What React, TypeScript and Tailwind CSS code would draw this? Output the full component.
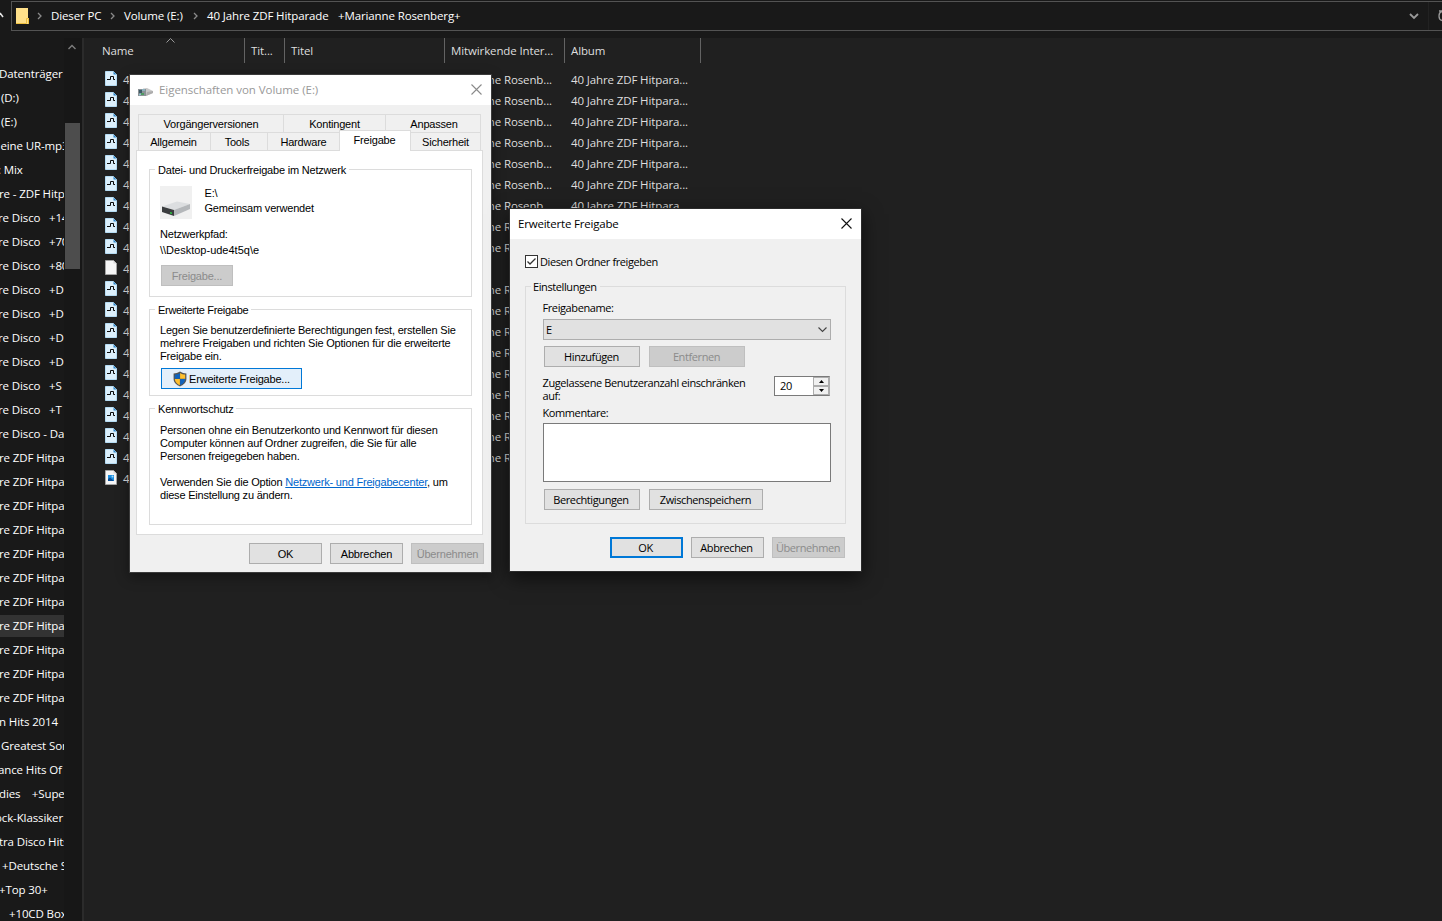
import React from 'react';

const folders = [
  { text: 'Datenträger', className: '-ml-px' },
  { text: '(D:)', className: 'ml-px' },
  { text: '(E:)', className: 'ml-px' },
  { text: 'eine UR-mp3', className: 'ml-[0.500px]' },
  { text: ': Mix', className: '-ml-[2px]' },
  { text: 're - ZDF Hitp', className: '-ml-px' },
  { text: 're Disco   +14', className: '-ml-[2px]' },
  { text: 're Disco   +70', className: '-ml-[2px]' },
  { text: 're Disco   +80', className: '-ml-[2px]' },
  { text: 're Disco   +D', className: '-ml-[2px]' },
  { text: 're Disco   +D', className: '-ml-[2px]' },
  { text: 're Disco   +D', className: '-ml-[2px]' },
  { text: 're Disco   +D', className: '-ml-[2px]' },
  { text: 're Disco   +S', className: '-ml-[2px]' },
  { text: 're Disco   +T', className: '-ml-[2px]' },
  { text: 're Disco - Da', className: '-ml-[2px]' },
  { text: 're ZDF Hitpa', className: '-ml-px' },
  { text: 're ZDF Hitpa', className: '-ml-px' },
  { text: 're ZDF Hitpa', className: '-ml-px' },
  { text: 're ZDF Hitpa', className: '-ml-px' },
  { text: 're ZDF Hitpa', className: '-ml-px' },
  { text: 're ZDF Hitpa', className: '-ml-px' },
  { text: 're ZDF Hitpa', className: '-ml-px' },
  { text: 're ZDF Hitpa', className: '-ml-px', selected: true },
  { text: 're ZDF Hitpa', className: '-ml-px' },
  { text: 're ZDF Hitpa', className: '-ml-px' },
  { text: 're ZDF Hitpa', className: '-ml-px' },
  { text: 'n Hits 2014', className: '-ml-px' },
  { text: 'Greatest Son', className: 'ml-px' },
  { text: 'ance Hits Of 9', className: '-ml-[2px]' },
  { text: 'dies    +Super', className: '-ml-px' },
  { text: 'ock-Klassiker', className: '-ml-[5px]' },
  { text: 'tra Disco Hits', className: '-ml-px' },
  { text: '+Deutsche S', className: 'ml-[2px]' },
  { text: '+Top 30+', className: '-ml-px' },
  { text: '+10CD Box', className: 'ml-[9px]' },
];

const files = Array.from({ length: 20 }, (_, i) => (i === 9 ? 'blank' : i === 19 ? 'image' : 'music'));

const FileIcon = ({ kind }: { kind: string }) => (
  <svg width="12" height="15" viewBox="0 0 12 15" className="mb-[2px] -ml-px shrink-0">
    <path d="M0.5 0.5H8.5L11.5 3.5V14.5H0.5Z" fill={kind === 'music' ? '#dcf0fc' : '#f6f6f6'} stroke={kind === 'music' ? '#b5dcf4' : '#a5a5a5'} />
    <path d="M8.5 0.5V3.5H11.5Z" fill={kind === 'music' ? '#2f86c8' : '#d8d8d8'} />
    {kind === 'music' && <path d="M2 8.5H5.5V5.5H8.5V8.5H10" fill="none" stroke="#0b0b0b" />}
    {kind === 'image' && (
      <>
        <rect x="3" y="5" width="6" height="6" fill="#1d8fe0" />
        <path d="M3 11V9L5 7.500L9 11Z" fill="#0b4d93" />
        <circle cx="7.500" cy="6.500" r="1" fill="#9fdcff" />
      </>
    )}
  </svg>
);

const Chevron = ({ className = '' }: { className?: string }) => (
  <svg width="5" height="8" viewBox="0 0 5 8" className={className}>
    <path d="M1 1L4 4L1 7" fill="none" stroke="#8a8a8a" strokeWidth="1.3" />
  </svg>
);

const CloseIcon = ({ color }: { color: string }) => (
  <svg width="11" height="11" viewBox="0 0 11 11">
    <path d="M0.5 0.5L10.5 10.5M10.5 0.5L0.5 10.5" stroke={color} strokeWidth="1.1" />
  </svg>
);

const Shield = () => (
  <svg width="14" height="16" viewBox="0 0 14 16" className="shrink-0">
    <path d="M7 0.600C5 2 3 2.400 0.600 2.400V8C0.600 11.500 3.500 14 7 15.400C10.500 14 13.400 11.500 13.400 8V2.400C11 2.400 9 2 7 0.600Z" fill="#555" />
    <path d="M6.900 2C5.300 3 3.500 3.500 1.800 3.500V7.800H6.900Z" fill="#0f63bd" />
    <path d="M7.100 2C8.700 3 10.500 3.500 12.200 3.500V7.800H7.100Z" fill="#ffc02e" />
    <path d="M1.800 8H6.900V14.200C4 13 1.900 11 1.800 8Z" fill="#ffc02e" />
    <path d="M12.200 8H7.100V14.200C10 13 12.100 11 12.200 8Z" fill="#0f63bd" />
  </svg>
);

const Button = ({ children, className = '', disabled, primary }: any) => (
  <button
    disabled={disabled}
    className={`flex h-[21px] shrink-0 items-center justify-center whitespace-nowrap ${
      disabled
        ? 'border border-[#bfbfbf] bg-[#cccccc] text-[#8b8b8b]'
        : primary
          ? 'border-2 border-[#0078d7] bg-[#e1e1e1]'
          : 'border border-[#adadad] bg-[#e1e1e1]'
    } ${className}`}
  >
    {children}
  </button>
);

const Group = ({ title, className = '', legend = '', children }: any) => (
  <section className={`border border-[#dcdcdc] ${className}`}>
    <h3 className={`-mt-2 ml-[5px] h-4 w-fit leading-4 whitespace-nowrap ${legend}`}>{title}</h3>
    {children}
  </section>
);

const Tab = ({ children, className = '' }: any) => (
  <div className={`flex items-center justify-center border-t border-l border-[#dcdcdc] ${className}`}>{children}</div>
);

const AddressBar = () => (
  <header className="flex h-[38px] shrink-0 items-start bg-[#191919] pt-px">
    <svg width="11" height="30" viewBox="0 0 11 30" className="shrink-0">
      <path d="M0 12L3 16" stroke="#e6e6e6" strokeWidth="1.5" />
    </svg>
    <div className="flex h-[30px] flex-1 items-center border-y border-l border-[#535353] text-white">
      <svg width="13" height="16" viewBox="0 0 13 16" className="ml-1">
        <path d="M0 0H12V10H13V16H0Z" fill="#ffe08a" />
        <path d="M0 15.500H10.500V10.500H12.500V16" fill="none" stroke="#eebf3f" />
      </svg>
      <Chevron className="ml-2" />
      <span className="ml-[9px] w-[51px] whitespace-nowrap">Dieser PC</span>
      <Chevron className="ml-[8px]" />
      <span className="ml-[9px] w-[60px] whitespace-nowrap">Volume (E:)</span>
      <Chevron className="ml-[9px]" />
      <span className="ml-[9px] whitespace-pre">40 Jahre ZDF Hitparade</span>
      <span className="ml-[9.500px] whitespace-pre">+Marianne Rosenberg+</span>
      <svg width="10" height="7" viewBox="0 0 10 7" className="mr-[9px] ml-auto">
        <path d="M1 1L5 5L9 1" fill="none" stroke="#9a9a9a" strokeWidth="1.800" />
      </svg>
      <div className="flex h-full w-[14px] items-center justify-end overflow-hidden border-l border-[#222]">
        <svg width="4" height="12" viewBox="0 0 4 12">
          <path d="M4 1.500C2 2 1 4 1 6C1 8 2 10 4 10.500M1 1H4" fill="none" stroke="#9a9a9a" strokeWidth="1.300" />
        </svg>
      </div>
    </div>
  </header>
);

const Sidebar = () => (
  <aside className="flex h-full w-[84px] shrink-0 border-r-2 border-[#2b2b2b] bg-[#191919] text-white">
    <ul className="w-16 pt-6">
      {folders.map((f, i) => (
        <li key={i} className={`h-6 w-16 overflow-hidden py-px whitespace-pre ${f.selected ? 'bg-[#333333] bg-clip-content' : ''}`}>
          <span className={`block leading-[22px] ${f.className}`}>{f.text}</span>
        </li>
      ))}
    </ul>
    <div className="flex w-[18px] flex-col bg-[#171717] pl-px">
      <svg width="8" height="6" viewBox="0 0 8 6" className="mt-[6px] ml-[3px]">
        <path d="M0.500 5L4 1.500L7.500 5" fill="none" stroke="#7e7e7e" strokeWidth="1.400" />
      </svg>
      <div className="mt-[73px] h-[146px] w-[15px] bg-[#4d4d4d]" />
    </div>
  </aside>
);

const FileList = () => (
  <main className="min-w-0 flex-1 bg-[#202020] text-[#dedede]">
    <div className="flex h-[25px] items-center">
      <div className="relative flex h-full w-[161px] items-center border-r border-[#636363] pl-[18px]">
        Name
        <svg width="9" height="5" viewBox="0 0 9 5" className="absolute top-0 left-[82px]">
          <path d="M0.500 4.500L4.500 0.500L8.500 4.500" fill="none" stroke="#9a9a9a" />
        </svg>
      </div>
      <div className="flex h-full w-10 items-center border-r border-[#636363] pl-[6px]">Tit...</div>
      <div className="flex h-full w-40 items-center border-r border-[#636363] pl-[6px]">Titel</div>
      <div className="flex h-full w-[120px] items-center border-r border-[#636363] pl-[6px] whitespace-nowrap">Mitwirkende Inter...</div>
      <div className="flex h-full w-[136px] items-center border-r border-[#636363] pl-[6px]">Album</div>
    </div>
    <ul className="pt-[6px]">
      {files.map((kind, i) => (
        <li key={i} className="flex h-[21px] items-center pl-[22px] whitespace-nowrap">
          <FileIcon kind={kind} />
          <span className="ml-[6px] w-2">4</span>
          {kind === 'music' && (
            <>
              <span className="ml-[313px] flex w-[108px] justify-end">Marianne Rosenb...</span>
              <span className="ml-[19px]">40 Jahre ZDF Hitpara...</span>
            </>
          )}
        </li>
      ))}
    </ul>
  </main>
);

const PropertiesDialog = () => (
  <div className="absolute top-[74px] left-[129px] flex h-[499px] w-[363px] flex-col border border-[#3b3b3b] bg-[#f0f0f0] font-['Liberation_Sans',Arial,sans-serif] text-[11px] tracking-[-0.200px] text-black shadow-[0_4px_12px_rgba(0,0,0,0.400)]">
    <div className="flex h-[30px] shrink-0 items-center bg-white pr-[9px] pl-2 font-['Open_Sans',sans-serif] text-[11.500px] tracking-[-0.050px] text-[#999]">
      <svg width="16" height="10" viewBox="0 0 16 10" className="mt-1">
        <path d="M5 1.500L9 1L15 4V6L8 9H5Z" fill="#c9c9c9" />
        <path d="M9 5L15 4V6L8 9Z" fill="#adadad" />
        <rect x="0" y="2" width="8" height="7" fill="#8b9296" />
        <path d="M1 3H4V6H1Z" fill="#3d5a66" />
        <path d="M4 3H7M1 8L4 6.500" stroke="#8fd3e8" />
        <rect x="3" y="6" width="3" height="2" fill="#4f9a62" />
      </svg>
      <span className="ml-[5px]">Eigenschaften von Volume (E:)</span>
      <div className="mb-[2px] ml-auto">
        <CloseIcon color="#8a8a8a" />
      </div>
    </div>

    <div className="mt-[9px] ml-2 flex h-[18px] w-[343px] shrink-0 border-r border-[#dcdcdc]">
      <Tab className="w-[145px]">Vorgängerversionen</Tab>
      <Tab className="w-[102px]">Kontingent</Tab>
      <Tab className="flex-1 pl-[2px]">Anpassen</Tab>
    </div>
    <div className="z-10 ml-2 flex h-[18px] w-[343px] shrink-0 items-start border-r border-[#dcdcdc]">
      <Tab className="h-[18px] w-[72px] pr-[2px]">Allgemein</Tab>
      <Tab className="h-[18px] w-[57px] pr-1">Tools</Tab>
      <Tab className="h-[18px] w-[72px]">Hardware</Tab>
      <Tab className="-mt-[2px] h-[21px] w-[72px] border-r bg-white pr-px pb-[2px]">Freigabe</Tab>
      <Tab className="h-[18px] flex-1 border-l-0">Sicherheit</Tab>
    </div>

    <div className="ml-[6px] h-[385px] w-[347px] shrink-0 border border-[#dcdcdc] bg-white pt-[18px] pl-3">
      <Group title="Datei- und Druckerfreigabe im Netzwerk" className="h-[128px] w-[323px]" legend="bg-white px-[3px]">
        <div className="mt-[8px] ml-[10px] flex">
          <svg width="32" height="33" viewBox="0 0 32 33">
            <rect width="32" height="33" fill="#f0f0f0" />
            <path d="M2 20.500L17 15.500L30 18L14 24Z" fill="#dcdee0" />
            <path d="M2 20.500L14 24V30L2 26Z" fill="#3b3d3f" />
            <path d="M14 24L30 18V23L14 30Z" fill="#b4b7ba" />
            <path d="M10 26L12 26.500V28L10 27.500Z" fill="#2bc840" />
          </svg>
          <div className="ml-[12.500px] leading-[15px]">
            <p>E:\</p>
            <p>Gemeinsam verwendet</p>
          </div>
        </div>
        <div className="mt-[7px] ml-[10px] leading-4">
          <p>Netzwerkpfad:</p>
          <p className="tracking-normal">\\Desktop-ude4t5q\e</p>
        </div>
        <Button disabled className="mt-[7px] ml-[11px] w-[72px]">Freigabe...</Button>
      </Group>

      <Group title="Erweiterte Freigabe" className="mt-3 h-[87px] w-[323px]" legend="bg-white px-[3px] tracking-[-0.300px]">
        <p className="mt-[6px] ml-[10px] leading-[13px] whitespace-nowrap">
          Legen Sie benutzerdefinierte Berechtigungen fest, erstellen Sie<br />
          mehrere Freigaben und richten Sie Optionen für die erweiterte<br />
          Freigabe ein.
        </p>
        <button className="mt-[5px] ml-[11px] flex h-[21px] w-[141px] items-center justify-center gap-[2px] border border-[#0078d7] bg-[#e3effa]">
          <Shield />
          Erweiterte Freigabe...
        </button>
      </Group>

      <Group title="Kennwortschutz" className="mt-3 h-[117px] w-[323px]" legend="bg-white px-[3px]">
        <p className="mt-[7px] ml-[10px] leading-[13px] whitespace-nowrap">
          Personen ohne ein Benutzerkonto und Kennwort für diesen<br />
          Computer können auf Ordner zugreifen, die Sie für alle<br />
          Personen freigegeben haben.
        </p>
        <p className="mt-[13px] ml-[10px] leading-[13px] whitespace-nowrap">
          Verwenden Sie die Option <a className="text-[#0066cc] underline">Netzwerk- und Freigabecenter</a>, um<br />
          diese Einstellung zu ändern.
        </p>
      </Group>
    </div>

    <div className="mt-2 flex justify-end gap-2 pr-[7px]">
      <Button className="w-[73px]">OK</Button>
      <Button className="w-[73px]">Abbrechen</Button>
      <Button disabled className="w-[73px]">Übernehmen</Button>
    </div>
  </div>
);

const SharingDialog = () => (
  <div className="absolute top-[208px] left-[509px] flex h-[364px] w-[353px] flex-col border border-[#2b2b2b] bg-[#f0f0f0] text-[11px] tracking-[-0.400px] text-black shadow-[0_6px_18px_rgba(0,0,0,0.600)]">
    <div className="flex h-[30px] shrink-0 items-center bg-white pr-[9px] pl-2 text-[11.500px] tracking-[-0.200px]">
      Erweiterte Freigabe
      <div className="mb-[2px] ml-auto">
        <CloseIcon color="#111" />
      </div>
    </div>

    <div className="mt-4 ml-[15px] flex h-[13px] items-center">
      <div className="flex h-[13px] w-[13px] items-center justify-center border border-[#333] bg-white">
        <svg width="11" height="11" viewBox="0 0 11 11">
          <path d="M1.500 5.500L4 8L9.500 2.500" fill="none" stroke="#333" strokeWidth="1.300" />
        </svg>
      </div>
      <span className="ml-[2px]">Diesen Ordner freigeben</span>
    </div>

    <Group title="Einstellungen" className="mt-[18px] ml-[15px] h-[238px] w-[321px] shrink-0" legend="bg-[#f0f0f0] pr-[3px] pl-[2px]">
      <div className="mt-[5px] ml-[17px]">
        <p className="-ml-[0.500px] leading-4">Freigabename:</p>
        <div className="mt-[3px] flex h-[21px] w-[288px] items-center justify-between border border-[#adadad] bg-[#e1e1e1] pr-[3px] pl-[2px]">
          E
          <svg width="9" height="6" viewBox="0 0 9 6">
            <path d="M0.500 0.500L4.500 4.500L8.500 0.500" fill="none" stroke="#444" strokeWidth="1.100" />
          </svg>
        </div>
        <div className="mt-[6px] ml-px flex gap-[9px]">
          <Button className="w-24 pr-px">Hinzufügen</Button>
          <Button disabled className="w-24 pr-px">Entfernen</Button>
        </div>
        <div className="mt-[9px] flex h-[29px] w-[287px] items-start justify-between">
          <p className="-ml-[0.500px] leading-[13px] whitespace-nowrap">
            Zugelassene Benutzeranzahl einschränken<br />
            auf:
          </p>
          <div className="flex h-5 w-14 border border-[#7a7a7a] border-r-[#adadad] bg-white">
            <span className="w-[38px] pl-[5px] leading-[18px]">20</span>
            <div className="flex w-4 flex-col bg-[#f0f0f0]">
              <div className="flex h-[9px] items-center justify-center border border-[#adadad]">
                <svg width="5" height="3" viewBox="0 0 5 3"><path d="M0 3L2.500 0L5 3Z" /></svg>
              </div>
              <div className="flex h-[9px] items-center justify-center border border-[#adadad]">
                <svg width="5" height="3" viewBox="0 0 5 3"><path d="M0 0L2.500 3L5 0Z" /></svg>
              </div>
            </div>
          </div>
        </div>
        <p className="-ml-[0.500px] leading-4">Kommentare:</p>
        <div className="mt-[2px] h-[59px] w-[288px] border border-[#7a7a7a] bg-white" />
        <div className="mt-[7px] ml-px flex gap-[9px]">
          <Button className="w-24 pr-[2px]">Berechtigungen</Button>
          <Button className="w-[114px] pr-px">Zwischenspeichern</Button>
        </div>
      </div>
    </Group>

    <div className="mt-[13px] flex justify-end gap-2 pr-4">
      <Button primary className="w-[73px] pr-[2px]">OK</Button>
      <Button className="w-[73px] pr-[2px]">Abbrechen</Button>
      <Button disabled className="w-[73px] pr-px">Übernehmen</Button>
    </div>
  </div>
);

export default function App() {
  return (
    <div className="relative flex h-[921px] w-[1442px] flex-col overflow-hidden bg-[#191919] font-['Open_Sans',sans-serif] text-[11.500px] leading-4 tracking-[-0.120px]">
      <AddressBar />
      <div className="flex min-h-0 flex-1 overflow-hidden">
        <Sidebar />
        <FileList />
      </div>
      <PropertiesDialog />
      <SharingDialog />
    </div>
  );
}
